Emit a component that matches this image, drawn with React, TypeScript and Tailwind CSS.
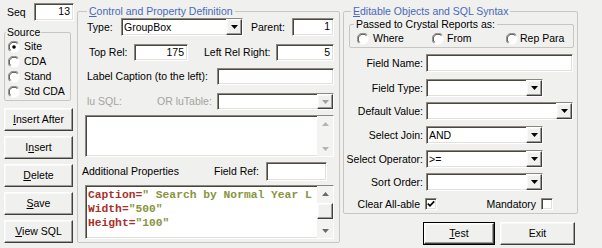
import type { ReactNode } from "react";

const sunken =
  "border border-t-[#8c8880] border-l-[#8c8880] border-r-white border-b-white shadow-[inset_1px_1px_0_#4a4640,inset_-1px_-1px_0_#e2e0da]";
const raised =
  "border border-t-white border-l-white border-r-[#404040] border-b-[#404040] shadow-[inset_-1px_-1px_0_#a09c94,inset_1px_1px_0_#f8f8f6] bg-[#f0f0ee]";
const group = "border border-[#c8c6c0] rounded-[2px]";

function Radio({ checked }: { checked?: boolean }) {
  return (
    <svg width="12" height="12" viewBox="0 0 12 12" className="shrink-0">
      <circle cx="6" cy="6" r="5.5" fill="#fff" />
      <path d="M10.2 1.8 A5.5 5.5 0 0 0 1.8 10.2" fill="none" stroke="#8c8880" />
      <path d="M9.4 2.6 A4.6 4.6 0 0 0 2.6 9.4" fill="none" stroke="#404040" />
      {checked && <circle cx="6" cy="6" r="1.8" fill="#000" />}
    </svg>
  );
}

function Check({ checked }: { checked?: boolean }) {
  return (
    <span className={`w-[12px] h-[12px] shrink-0 bg-white flex items-center justify-center ${sunken}`}>
      {checked && (
        <svg width="8" height="8" viewBox="0 0 8 8">
          <path d="M0.8 3.6 L3 5.8 L7.2 1.4" stroke="#000" strokeWidth="1.7" fill="none" />
        </svg>
      )}
    </span>
  );
}

function Tri({ up, color = "#000" }: { up?: boolean; color?: string }) {
  return (
    <svg width="7" height="4" viewBox="0 0 7 4">
      <path d={up ? "M0 4h7L3.5 0z" : "M0 0h7L3.5 4z"} fill={color} />
    </svg>
  );
}

function Combo({ className, value, disabled }: { className: string; value?: string; disabled?: boolean }) {
  return (
    <div className={`flex h-[18px] bg-white ${sunken} ${className}`}>
      <span className="flex-1 pl-[2px] leading-[16px] whitespace-nowrap overflow-hidden">{value}</span>
      <span className={`w-[16px] h-full flex items-center justify-center ${raised}`}>
        <Tri color={disabled ? "#a0a0a0" : "#000"} />
      </span>
    </div>
  );
}

function Field({ className, value }: { className: string; value?: string }) {
  return (
    <div className={`bg-white text-right pr-[3px] leading-[15px] ${sunken} ${className}`}>{value}</div>
  );
}

function ScrollBar({ thumb, dim }: { thumb?: boolean; dim?: boolean }) {
  const c = dim ? "#b4b4b0" : "#6a6a6a";
  return (
    <div className="w-[16px] h-full flex flex-col bg-[#f3f3f1] shrink-0">
      <div className="h-[15px] flex items-center justify-center">
        <Tri up color={c} />
      </div>
      <div className="flex-1">
        {thumb && <div className={`h-[16px] mt-[2px] ${raised}`} />}
      </div>
      <div className="h-[15px] flex items-center justify-center">
        <Tri color={c} />
      </div>
    </div>
  );
}

function Btn({ children, className = "", def }: { children: ReactNode; className?: string; def?: boolean }) {
  return (
    <div className={`${def ? "border border-black" : ""} ${className}`}>
      <div className={`h-full flex items-center justify-center ${raised}`}>{children}</div>
    </div>
  );
}

function Row({ label, children, className = "" }: { label: string; children: ReactNode; className?: string }) {
  return (
    <div className={`flex items-center h-[18px] ${className}`}>
      <span className="w-[79px] flex justify-end whitespace-nowrap">{label}</span>
      <div className="ml-[3px]">{children}</div>
    </div>
  );
}

export default function App() {
  return (
    <div className="w-[602px] h-[248px] overflow-hidden bg-[#f0f0ee] flex items-start font-['Liberation_Sans',Arial,sans-serif] text-[10.5px] leading-[13px] text-black">
      {/* left column */}
      <div className="w-[77px] pl-[4px] pt-[3px] flex flex-col">
        <div className="flex items-center h-[18px]">
          <span className="w-[30px] pl-[3px]">Seq</span>
          <Field className="w-[40px] h-[18px]" value="13" />
        </div>
        <fieldset className={`mt-[5px] w-[67px] h-[75px] ${group}`}>
          <legend className="ml-[1px] px-[1px] leading-[13px]">Source</legend>
          {[
            ["Site", true],
            ["CDA", false],
            ["Stand", false],
            ["Std CDA", false],
          ].map(([t, c]) => (
            <div key={t as string} className="flex items-center h-[15px] pl-[3px] gap-[4px]">
              <Radio checked={c as boolean} />
              <span>{t as string}</span>
            </div>
          ))}
        </fieldset>
        <div className="mt-[7px] flex flex-col gap-[5px]">
          <Btn className="w-[69px] h-[23px]">
            <span><u>I</u>nsert After</span>
          </Btn>
          <Btn className="w-[69px] h-[23px]">
            <span>I<u>n</u>sert</span>
          </Btn>
          <Btn className="w-[69px] h-[23px]">
            <span><u>D</u>elete</span>
          </Btn>
          <Btn className="w-[69px] h-[23px]">
            <span><u>S</u>ave</span>
          </Btn>
          <Btn className="w-[69px] h-[23px]">
            <span><u>V</u>iew SQL</span>
          </Btn>
        </div>
      </div>

      {/* control and property definition */}
      <fieldset className={`mt-[4px] w-[263px] h-[239px] ${group}`}>
        <legend className="ml-[9px] px-[2px] leading-[14px] text-[#4a68b8]">
          <u>C</u>ontrol and Property Definition
        </legend>
        <div className="flex flex-col">
          <div className="flex items-center h-[18px] pl-[9px]">
            <span className="w-[34px]">Type:</span>
            <Combo className="w-[122px]" value="GroupBox" />
            <span className="ml-[8px] w-[41px]">Parent:</span>
            <Field className="w-[42px] h-[18px]" value="1" />
          </div>
          <div className="flex items-center h-[17px] mt-[8px] pl-[11px]">
            <span className="w-[45px]">Top Rel:</span>
            <Field className="w-[54px] h-[17px]" value="175" />
            <span className="ml-[16px] w-[72px]">Left Rel Right:</span>
            <Field className="w-[58px] h-[17px]" value="5" />
          </div>
          <div className="flex items-center h-[17px] mt-[7px] pl-[9px]">
            <span className="w-[130px] whitespace-nowrap">Label Caption (to the left):</span>
            <Field className="w-[117px] h-[17px]" />
          </div>
          <div className="flex items-center h-[17px] mt-[8px] pl-[9px] text-[#a4a4a0]">
            <span className="w-[70px]">lu SQL:</span>
            <span className="w-[60px] whitespace-nowrap">OR luTable:</span>
            <Combo className="w-[117px] !h-[17px]" disabled />
          </div>
          <div className={`mt-[5px] ml-[7px] w-[249px] h-[42px] bg-white flex justify-end ${sunken}`}>
            <ScrollBar dim />
          </div>
          <div className="flex items-center h-[19px] mt-[5px] pl-[4px]">
            <span className="w-[132px] whitespace-nowrap">Additional Properties</span>
            <span className="w-[52px]">Field Ref:</span>
            <Field className="w-[61px] h-[19px]" />
          </div>
          <div className={`mt-[4px] ml-[7px] w-[249px] h-[54px] bg-white flex ${sunken}`}>
            <div className="flex-1 overflow-hidden whitespace-pre pt-[2px] pl-[2px] font-['Liberation_Mono','Courier_New',monospace] font-bold text-[11.3px] leading-[14px]">
              <div>
                <span className="text-[#a8302c]">Caption=</span>
                <span className="text-[#8a9440]">" Search by Normal Year L</span>
              </div>
              <div>
                <span className="text-[#a8302c]">Width=</span>
                <span className="text-[#8a9440]">"500"</span>
              </div>
              <div>
                <span className="text-[#a8302c]">Height=</span>
                <span className="text-[#8a9440]">"100"</span>
              </div>
            </div>
            <ScrollBar thumb />
          </div>
        </div>
      </fieldset>

      {/* editable objects */}
      <div className="ml-[3px] mt-[4px] flex flex-col">
        <fieldset className={`w-[235px] h-[210px] ${group}`}>
          <legend className="ml-[7px] px-[2px] leading-[14px] text-[#4a68b8]">
            <u>E</u>ditable Objects and SQL Syntax
          </legend>
          <fieldset className={`ml-[5px] w-[225px] h-[30px] ${group}`}>
            <legend className="ml-[4px] px-[2px] leading-[13px]">Passed to Crystal Reports as:</legend>
            <div className="flex items-center h-[15px] pl-[7px]">
              <div className="w-[75px] flex items-center gap-[4px]">
                <Radio />
                <span>Where</span>
              </div>
              <div className="w-[74px] flex items-center gap-[3px]">
                <Radio />
                <span>From</span>
              </div>
              <div className="flex items-center gap-[2px]">
                <Radio />
                <span>Rep Para</span>
              </div>
            </div>
          </fieldset>
          <Row label="Field Name:" className="mt-[6px]">
            <Field className="w-[147px] h-[18px]" />
          </Row>
          <Row label="Field Type:" className="mt-[7px]">
            <Combo className="w-[117px]" />
          </Row>
          <Row label="Default Value:" className="mt-[5px]">
            <Combo className="w-[147px]" />
          </Row>
          <Row label="Select Join:" className="mt-[6px]">
            <Combo className="w-[117px]" value="AND" />
          </Row>
          <Row label="Select Operator:" className="mt-[6px]">
            <Combo className="w-[117px]" value=">=" />
          </Row>
          <Row label="Sort Order:" className="mt-[5px]">
            <Combo className="w-[117px]" />
          </Row>
          <div className="flex items-center h-[14px] mt-[6px]">
            <span className="w-[76px] flex justify-end whitespace-nowrap">Clear All-able</span>
            <span className="ml-[5px]">
              <Check checked />
            </span>
            <span className="w-[99px] flex justify-end">Mandatory</span>
            <span className="ml-[5px]">
              <Check />
            </span>
          </div>
        </fieldset>
        <div className="mt-[8px] pl-[80px] flex gap-[5px]">
          <Btn className="w-[72px] h-[23px]" def>
            <span><u>T</u>est</span>
          </Btn>
          <Btn className="w-[75px] h-[23px]">
            <span>Exit</span>
          </Btn>
        </div>
      </div>
    </div>
  );
}
